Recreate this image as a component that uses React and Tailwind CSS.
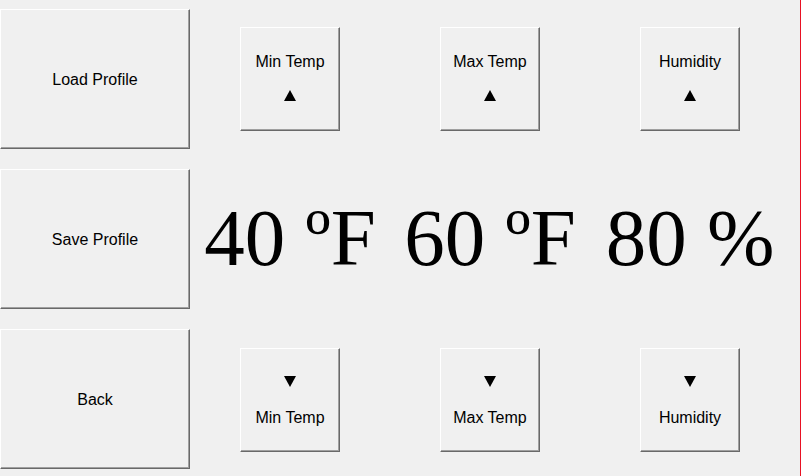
import { useState } from 'react'

// bouton façon Windows classique
function WinButton({ className = '', children, onClick }) {
  return (
    <button
      type="button"
      onClick={onClick}
      className={`bg-[#f0f0f0] border-t border-l border-white border-r border-b border-r-[#696969] border-b-[#696969] shadow-[inset_-1px_-1px_0_#a0a0a0] text-black text-[16px] flex flex-col items-center justify-center ${className}`}
      style={{ fontFamily: '"Liberation Sans", Arial, sans-serif' }}
    >
      {children}
    </button>
  )
}

function Arrow({ up }) {
  return (
    <svg width="12" height="11" viewBox="0 0 12 11">
      {up ? <polygon points="6,0 12,11 0,11" fill="#000" /> : <polygon points="0,0 12,0 6,11" fill="#000" />}
    </svg>
  )
}

export default function App() {
  const [vals, setVals] = useState({ min: 40, max: 60, hum: 80 })

  const cols = [
    { key: 'min', label: 'Min Temp', unit: 'ºF' },
    { key: 'max', label: 'Max Temp', unit: 'ºF' },
    { key: 'hum', label: 'Humidity', unit: '%' },
  ]

  function bump(key, d) {
    setVals(prev => ({ ...prev, [key]: prev[key] + d }))
  }

  return (
    <div className="w-[801px] h-[476px] bg-[#f0f0f0] flex overflow-hidden">
      <div className="w-[800px] h-full flex">
        {/* colonne de gauche */}
        <div className="w-[190px] pt-[9px] flex flex-col gap-[20px]">
          <WinButton className="h-[140px] w-[190px] pt-[2px]">Load Profile</WinButton>
          <WinButton className="h-[140px] w-[190px] pt-[2px]">Save Profile</WinButton>
          <WinButton className="h-[140px] w-[190px] pt-[2px]">Back</WinButton>
        </div>

        <div className="flex-1 grid grid-cols-[200px_200px_200px] content-start">
          {cols.map(c => (
            <div key={c.key} className="flex flex-col items-center">
              <div className="pt-[27px]">
                <WinButton className="w-[100px] h-[104px] gap-[20px] pb-[2px]" onClick={() => bump(c.key, 1)}>
                  <span className="leading-none mt-[-2px]">{c.label}</span>
                  <Arrow up />
                </WinButton>
              </div>
              <div
                className="h-[217px] flex items-center justify-center text-[81px] leading-none whitespace-nowrap text-black pb-[3px]"
                style={{ fontFamily: '"Liberation Serif", "Times New Roman", serif' }}
              >
                {vals[c.key]} {c.unit}
              </div>
              <WinButton className="w-[100px] h-[104px] gap-[23px] pt-[1px]" onClick={() => bump(c.key, -1)}>
                <Arrow />
                <span className="leading-none">{c.label}</span>
              </WinButton>
            </div>
          ))}
        </div>
      </div>
      <div className="w-[1px] h-full bg-[#e81123]" />
    </div>
  )
}
